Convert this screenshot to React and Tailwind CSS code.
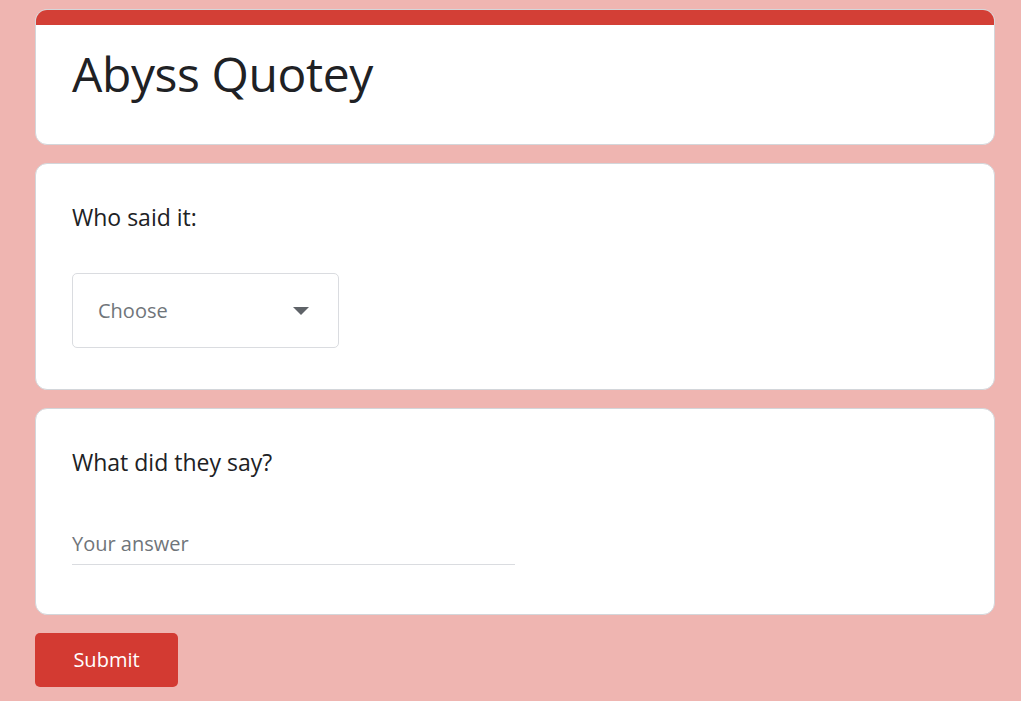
import React from 'react';

const font = { fontFamily: '"Open Sans", "Liberation Sans", sans-serif' };

const Card = ({ children, className = '' }) => (
  <div className={`bg-white rounded-[12px] border border-[#d3d6da] ${className}`}>{children}</div>
);

const App = () => {
  return (
    <div className="min-h-[701px] bg-[#efb5b1] pt-[9px] pl-[35px] pr-[26px] pb-4" style={font}>
      <div className="flex flex-col gap-[18px] w-[960px]">
        {/* header */}
        <div className="bg-white rounded-[12px] border border-[#d3d6da] overflow-hidden h-[136px]">
          <div className="h-[15px] bg-[#d33f36]" />
          <h1 className="pl-[36px] pt-[19px] text-[48px] leading-[60px] text-[#202124] tracking-[-0.4px]">Abyss Quotey</h1>
        </div>

        {/* question 1 */}
        <Card className="h-[227px] px-[36px] pt-[37px]">
          <p className="text-[23px] leading-[32px] text-[#202124]">Who said it:</p>
          <div className="mt-[40px] w-[267px] h-[75px] border border-[#dadce0] rounded-[5px] flex items-center justify-between pl-[25px] pr-[29px]">
            <span className="text-[20px] text-[#70757a]">Choose</span>
            <svg width="16" height="8" viewBox="0 0 16 8">
              <path d="M0 0 L16 0 L8 8 Z" fill="#5f6368" />
            </svg>
          </div>
        </Card>

        {/* question 2 */}
        <Card className="h-[207px] px-[36px] pt-[37px]">
          <p className="text-[23px] leading-[32px] text-[#202124]">What did they say?</p>
          <div className="mt-[52px] w-[443px] border-b border-[#dadce0] pb-[6px]">
            <span className="text-[20px] leading-[28px] text-[#70757a]">Your answer</span>
          </div>
        </Card>
      </div>

      <button className="mt-[18px] w-[143px] h-[54px] bg-[#d33a32] rounded-[5px] text-white text-[20px] font-medium">
        Submit
      </button>
    </div>
  );
};

export default App;
